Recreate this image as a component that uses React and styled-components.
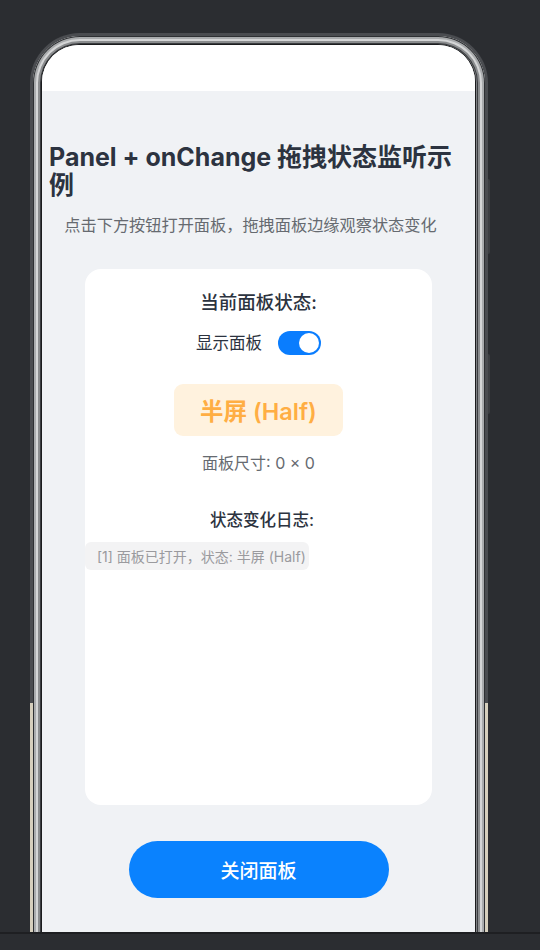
import React, { useState } from "react"
import styled, { createGlobalStyle } from "styled-components"

const GlobalStyle = createGlobalStyle`
  html, body {
    margin: 0;
    padding: 0;
    background: #2b2d31;
  }
  body {
    font-family: Inter, "Noto Sans CJK SC", "Noto Sans", sans-serif;
  }
`

const Page = styled.div`
  display: flex;
  flex-direction: column;
  width: 540px;
  height: 950px;
  overflow: hidden;
`

const Stage = styled.div`
  display: flex;
  align-items: flex-start;
  flex: 1;
  min-height: 0;
  overflow: hidden;
  padding: 33px 0 0 30px;
`

const Phone = styled.div`
  width: 458px;
  height: 960px;
  flex-shrink: 0;
  box-sizing: border-box;
  padding: 3px;
  border-radius: 50px;
  background: linear-gradient(
    to bottom,
    #4a4c50 0,
    #4a4c50 670px,
    #d6cfbd 670px,
    #d6cfbd 100%
  );
`

const Bezel = styled.div`
  height: 100%;
  box-sizing: border-box;
  padding: 8px 9px 0 8px;
  border-radius: 47px;
  background: #7d7f82;
  box-shadow: inset 0 0 0 1px #2e3033, inset 0 0 0 3px #a9abad,
    inset 0 0 0 5px #d4d5d6, inset 0 0 0 7px #8a8c8e, inset 0 0 0 8px #3b3d40;
`

const Screen = styled.div`
  height: 100%;
  display: flex;
  flex-direction: column;
  border-radius: 38px 38px 0 0;
  border: 1px solid #1b1c1e;
  border-bottom: none;
  overflow: hidden;
  background: #f0f2f5;
`

const StatusBar = styled.div`
  height: 46px;
  flex-shrink: 0;
  background: #ffffff;
`

const Content = styled.div`
  display: flex;
  flex-direction: column;
  align-items: center;
  padding: 52px 7px 0;
`

const Title = styled.h1`
  align-self: stretch;
  margin: 0;
  font-size: 25px;
  line-height: 28px;
  font-weight: 700;
  color: #2c3340;
  text-align: left;
`

const Subtitle = styled.p`
  margin: 15px 16px 0 0;
  font-size: 16.2px;
  line-height: 22px;
  color: #666a70;
  text-align: center;
`

const Card = styled.div`
  width: 347px;
  height: 536px;
  margin-top: 33px;
  box-sizing: border-box;
  display: flex;
  flex-direction: column;
  align-items: center;
  padding-top: 21px;
  background: #ffffff;
  border-radius: 16px;
`

const CardHeading = styled.div`
  font-size: ${(p) => p.size || 17}px;
  line-height: 24px;
  font-weight: 500;
  color: #2c3340;
  margin-top: ${(p) => p.gap || 0}px;
  padding-left: ${(p) => p.shift || 0}px;
`

const SwitchRow = styled.label`
  display: flex;
  align-items: center;
  gap: 16px;
  margin-top: 17px;
  font-size: 16.5px;
  line-height: 24px;
  color: #2c3340;
  cursor: pointer;
`

const Track = styled.span`
  display: flex;
  align-items: center;
  justify-content: ${(p) => (p.on ? "flex-end" : "flex-start")};
  width: 43px;
  height: 24px;
  box-sizing: border-box;
  padding: 2px;
  border-radius: 12px;
  background: ${(p) => (p.on ? "#0a7dfe" : "#d5d7da")};
`

const Knob = styled.span`
  width: 20px;
  height: 20px;
  border-radius: 50%;
  background: #ffffff;
`

const StateBadge = styled.div`
  margin-top: 29px;
  width: 169px;
  height: 52px;
  display: flex;
  align-items: center;
  justify-content: center;
  border-radius: 9px;
  background: #fff2de;
  color: #ffae43;
  font-size: 23.5px;
  font-weight: 600;
`

const SizeText = styled.div`
  margin-top: 16px;
  font-size: 16px;
  line-height: 22px;
  color: #666a70;
`

const LogList = styled.div`
  align-self: stretch;
  display: flex;
  flex-direction: column;
  align-items: flex-start;
  margin-top: 10px;
`

const LogItem = styled.div`
  height: 28px;
  display: flex;
  align-items: center;
  padding: 0 3px 0 12px;
  border-radius: 6px;
  background: #f3f3f4;
  font-size: 14px;
  color: #9a9a9e;
`

const CloseButton = styled.button`
  margin-top: 36px;
  width: 260px;
  height: 57px;
  border: none;
  border-radius: 29px;
  background: #0a82fe;
  color: #ffffff;
  font-family: inherit;
  font-size: 19px;
  font-weight: 500;
  cursor: pointer;
`

const SideRail = styled.div`
  display: flex;
  flex-direction: column;
  gap: 100px;
  padding-top: 146px;
`

const SideKey = styled.div`
  width: 2px;
  height: ${(p) => p.h}px;
  background: #3c3e42;
  border-radius: 0 2px 2px 0;
`

const BottomBar = styled.div`
  height: 16px;
  flex-shrink: 0;
  border-top: 2px solid #1e1f22;
  background: #2b2d31;
`

export default function App() {
  const [shown, setShown] = useState(true)
  const logs = ["[1] 面板已打开，状态: 半屏 (Half)"]

  return (
    <Page>
      <GlobalStyle />
      <Stage>
        <Phone>
          <Bezel>
            <Screen>
              <StatusBar />
              <Content>
                <Title>Panel + onChange 拖拽状态监听示例</Title>
                <Subtitle>点击下方按钮打开面板，拖拽面板边缘观察状态变化</Subtitle>
                <Card>
                  <CardHeading size={18.5}>当前面板状态:</CardHeading>
                  <SwitchRow onClick={() => setShown(!shown)}>
                    显示面板
                    <Track on={shown ? 1 : 0}>
                      <Knob />
                    </Track>
                  </SwitchRow>
                  <StateBadge>半屏 (Half)</StateBadge>
                  <SizeText>面板尺寸: 0 × 0</SizeText>
                  <CardHeading size={16.5} gap={34} shift={7}>
                    状态变化日志:
                  </CardHeading>
                  <LogList>
                    {logs.map((l) => (
                      <LogItem key={l}>{l}</LogItem>
                    ))}
                  </LogList>
                </Card>
                <CloseButton onClick={() => setShown(false)}>关闭面板</CloseButton>
              </Content>
            </Screen>
          </Bezel>
        </Phone>
        <SideRail>
          <SideKey h={75} />
          <SideKey h={60} />
        </SideRail>
      </Stage>
      <BottomBar />
    </Page>
  )
}
